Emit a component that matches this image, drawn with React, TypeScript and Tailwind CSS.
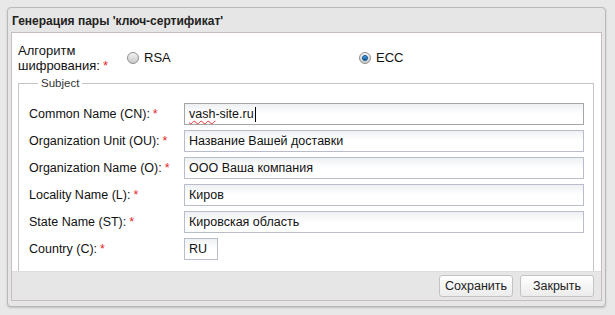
import React from "react";

const font = { fontFamily: '"Liberation Sans", Arial, sans-serif' };

function Req() {
  return <span className="text-[#e8262a] ml-[3px]">*</span>;
}

function Radio({ checked }: { checked?: boolean }) {
  return (
    <span className="inline-flex items-center justify-center w-[12px] h-[12px] rounded-full border border-[#8e8e8e] bg-gradient-to-b from-[#f4f4f4] to-[#c9c9c9]">
      {checked && (
        <span className="w-[6px] h-[6px] rounded-full bg-gradient-to-b from-[#4aa3e8] to-[#0b5fa8] border border-[#0d4f86]" />
      )}
    </span>
  );
}

const fields: { label: string; value: string; short?: boolean; focus?: boolean }[] = [
  { label: "Common Name (CN):", value: "vash-site.ru", focus: true },
  { label: "Organization Unit (OU):", value: "Название Вашей доставки" },
  { label: "Organization Name (O):", value: "ООО Ваша компания" },
  { label: "Locality Name (L):", value: "Киров" },
  { label: "State Name (ST):", value: "Кировская область" },
  { label: "Country (C):", value: "RU", short: true },
];

export default function App() {
  return (
    <div
      className="w-[615px] h-[315px] bg-[#e8e8e8] pt-[7px] pl-[7px] pr-[9px] text-[#111]"
      style={font}
    >
      <div className="w-[599px] h-[300px] rounded-[4px] border border-[#b9b9b9] bg-[#e6e6e6] shadow-[0_1px_2px_rgba(0,0,0,0.18)] flex flex-col px-[3px] pb-[5px]">
        <div className="h-[24px] flex items-center pl-[1px] pt-[1px] text-[12px] font-bold text-[#222]">
          Генерация пары 'ключ-сертификат'
        </div>
        <div className="flex-1 border border-[#c6bebe] flex flex-col min-h-0">
          <div className="flex-1 bg-white overflow-hidden min-h-0 pl-[6px] pr-[7px] pt-[10px]">
            <div className="flex items-start h-[32px]">
              <div className="w-[109px] text-[13px] leading-[15px]">
                Алгоритм
                <br />
                шифрования:
                <Req />
              </div>
              <div className="flex items-center mt-[5px] w-[232px]">
                <Radio />
                <span className="ml-[5px] text-[13px]">RSA</span>
              </div>
              <div className="flex items-center mt-[5px]">
                <Radio checked />
                <span className="ml-[5px] text-[13px]">ECC</span>
              </div>
            </div>
            <fieldset className="border border-[#c4c4c4] pl-[10px] pr-[9px] pt-[11px] pb-[20px]">
              <legend className="ml-[9px] px-[3px] text-[11.5px] text-[#333]">Subject</legend>
              <div className="flex flex-col gap-[5px]">
                {fields.map((f) => (
                  <div key={f.label} className="flex items-center h-[22px]">
                    <div className="w-[155px] text-[12.5px]">
                      {f.label}
                      <Req />
                    </div>
                    <div
                      className={
                        (f.short ? "w-[34px] " : "flex-1 ") +
                        "h-[22px] border flex items-center px-[4px] text-[12.5px] bg-gradient-to-b from-[#eef0f2] via-white to-white " +
                        (f.focus ? "border-[#a6a6a6]" : "border-[#b8bccb]")
                      }
                    >
                      <span className={f.focus ? "underline decoration-wavy decoration-[#e33] decoration-[1px] underline-offset-2" : ""}>
                        {f.focus ? "vash" : ""}
                      </span>
                      {f.focus ? "-site.ru" : f.value}
                      {f.focus && <span className="w-px h-[15px] bg-black ml-[1px]" />}
                    </div>
                  </div>
                ))}
              </div>
            </fieldset>
          </div>
          <div className="h-[29px] bg-[#e6e6e6] flex items-center justify-end gap-[7px] pr-[7px] border-t border-[#dedede]">
            <button className="w-[74px] h-[22px] rounded-[3px] border border-[#c3c3c3] bg-gradient-to-b from-white to-[#ececec] text-[12.5px] text-[#222]">
              Сохранить
            </button>
            <button className="w-[74px] h-[22px] rounded-[3px] border border-[#c3c3c3] bg-gradient-to-b from-white to-[#ececec] text-[12.5px] text-[#222]">
              Закрыть
            </button>
          </div>
        </div>
      </div>
    </div>
  );
}
